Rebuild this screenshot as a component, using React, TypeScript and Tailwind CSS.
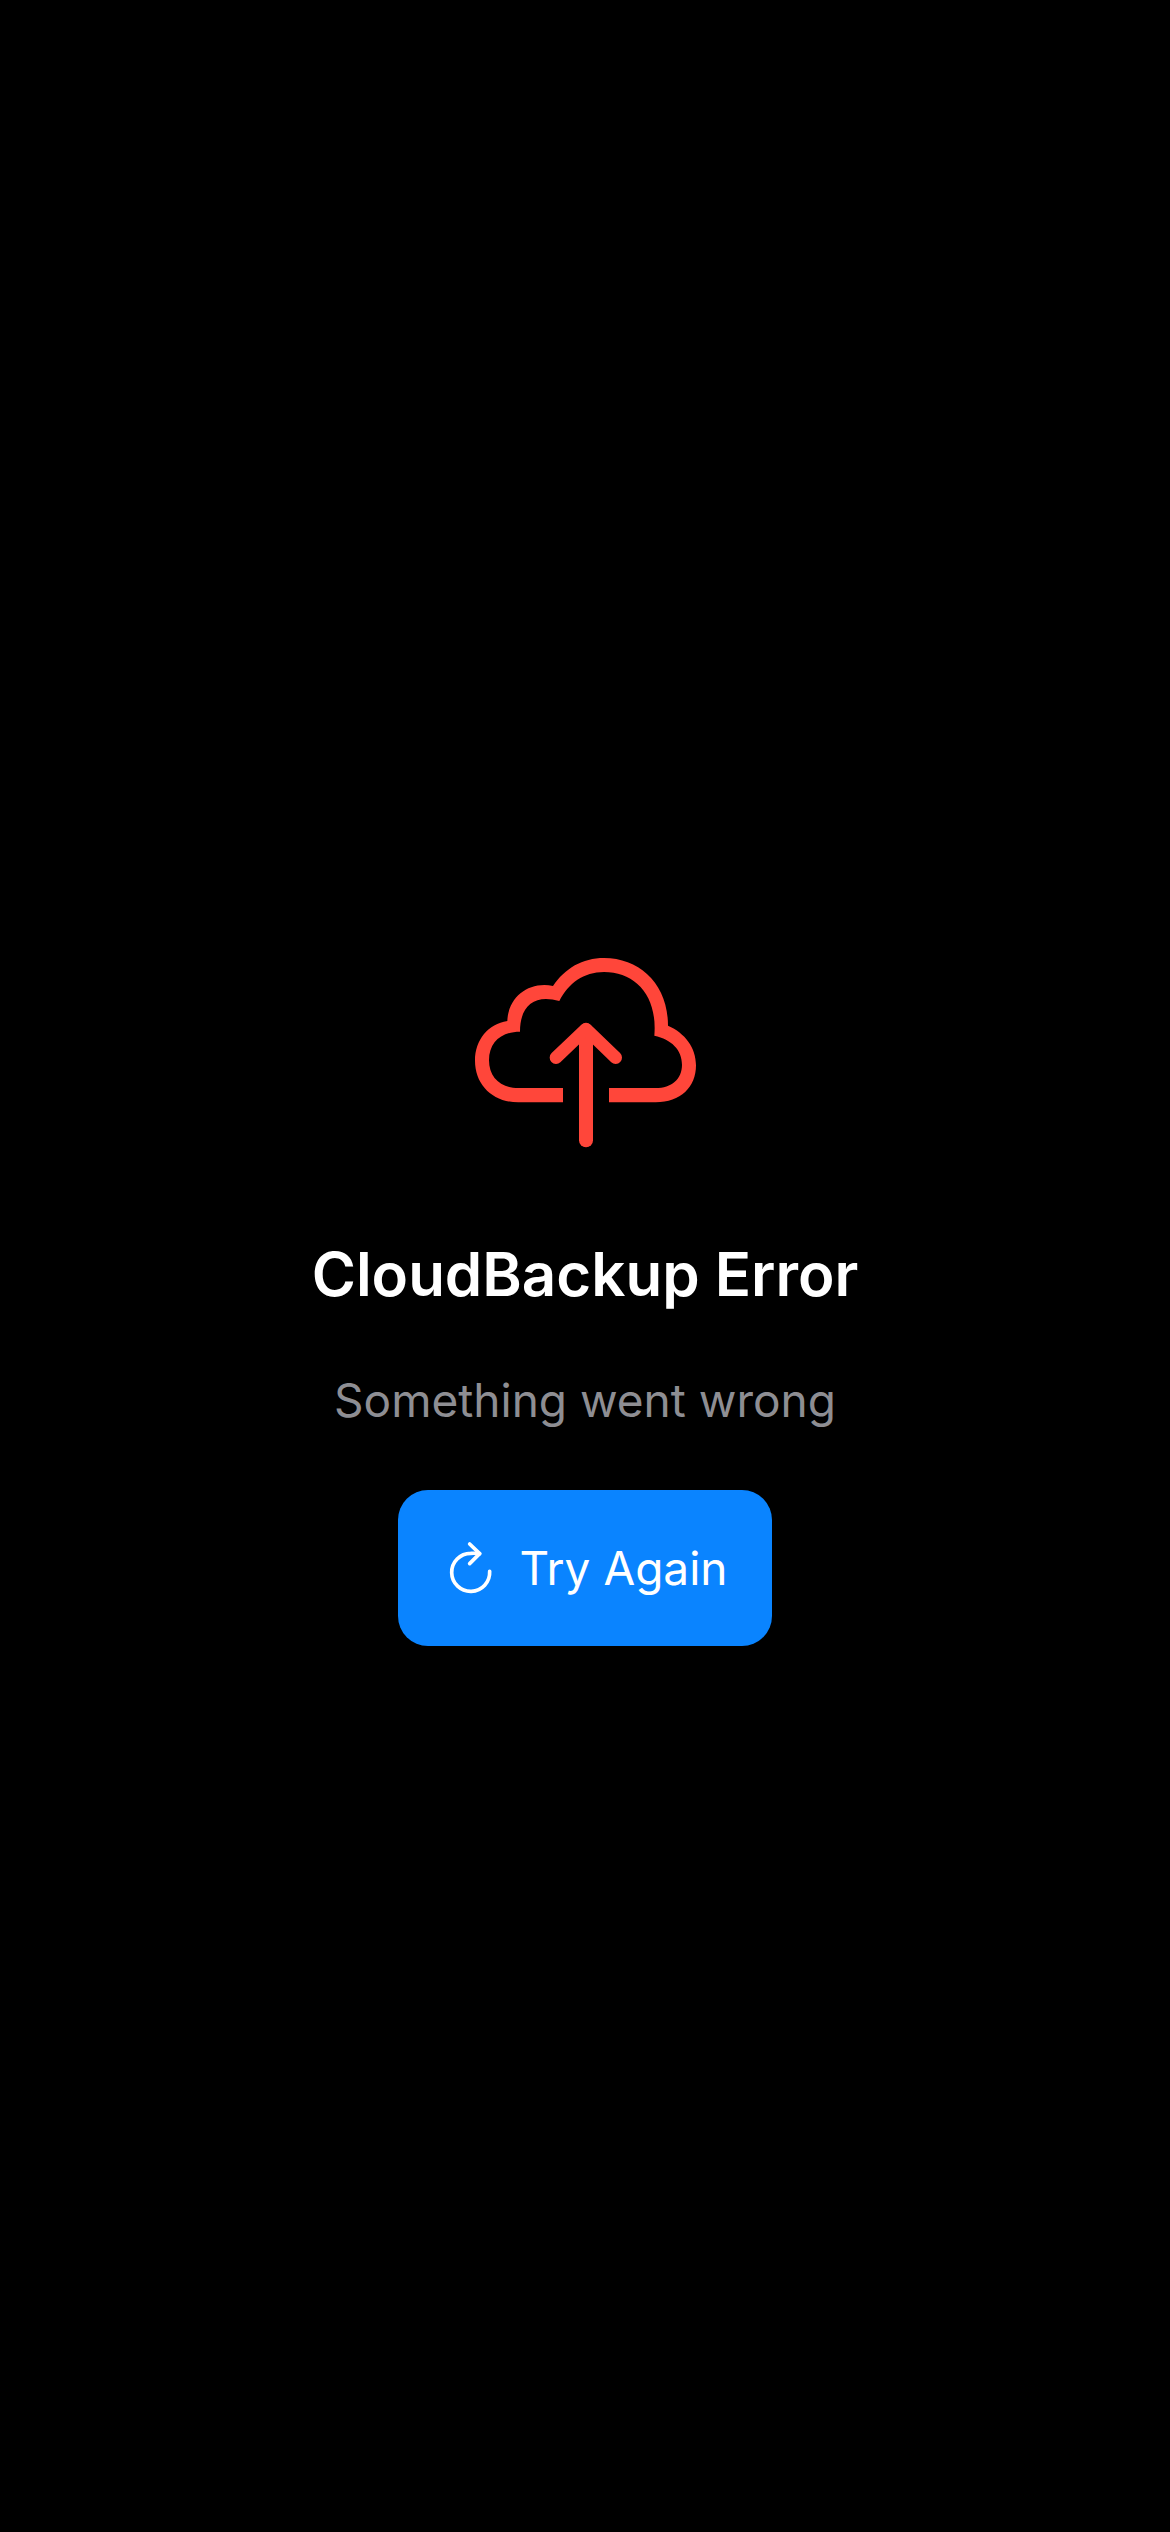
function CloudUploadIcon() {
  return (
    <svg className="h-[210px] w-60" viewBox="0 0 720 630" fill="none" aria-hidden="true">
      <path
        fill="#ff463a"
        d="M294 472H160C84 472 30 420 30 347C30 284 70 237 127 228C129 165 177 120 238 120Q251 120 264 123C300 70 352 39 417 39C525 39 609 118 609 242C660 264 693 308 693 361C693 426 647 472 572 472H432V429H572C620 429 651 402 651 359C651 315 620 283 568 272C578 150 510 81 417 81C356 81 310 115 283 168Q262 162 243 162C195 162 165 195 165 260C108 260 72 293 72 346C72 397 106 429 160 429H294Z"
      />
      <path d="M363 586V256" stroke="#ff463a" strokeWidth="42" strokeLinecap="round" />
      <path
        d="M273 338L363 252L452 338"
        stroke="#ff463a"
        strokeWidth="38"
        strokeLinecap="round"
        strokeLinejoin="round"
      />
    </svg>
  );
}

function RetryIcon() {
  return (
    <svg
      className="h-[75px] w-[70px]"
      viewBox="0 0 210 225"
      fill="none"
      stroke="currentColor"
      strokeWidth="11"
      strokeLinecap="round"
      strokeLinejoin="round"
      aria-hidden="true"
    >
      <path d="M164 121A57 57 0 1 1 107 67Q121 66 134 68" />
      <path d="M104 39L134 68L104 98" />
    </svg>
  );
}

export default function App() {
  return (
    <main className="flex min-h-screen flex-col items-center justify-center bg-black pt-[59px] font-['Inter',sans-serif]">
      <CloudUploadIcon />
      <h1 className="mt-[79px] text-center text-[60px] leading-[80px] font-semibold text-white">
        CloudBackup Error
      </h1>
      <p className="mt-14 text-center text-[46px] leading-[60px] text-[#8e8e93]">
        Something went wrong
      </p>
      <button
        type="button"
        className="mt-[60px] flex h-[156px] items-center gap-3.5 rounded-[30px] bg-[#0a84ff] pr-11 pl-[37px] text-[46px] leading-[60px] text-white"
      >
        <RetryIcon />
        Try Again
      </button>
    </main>
  );
}
